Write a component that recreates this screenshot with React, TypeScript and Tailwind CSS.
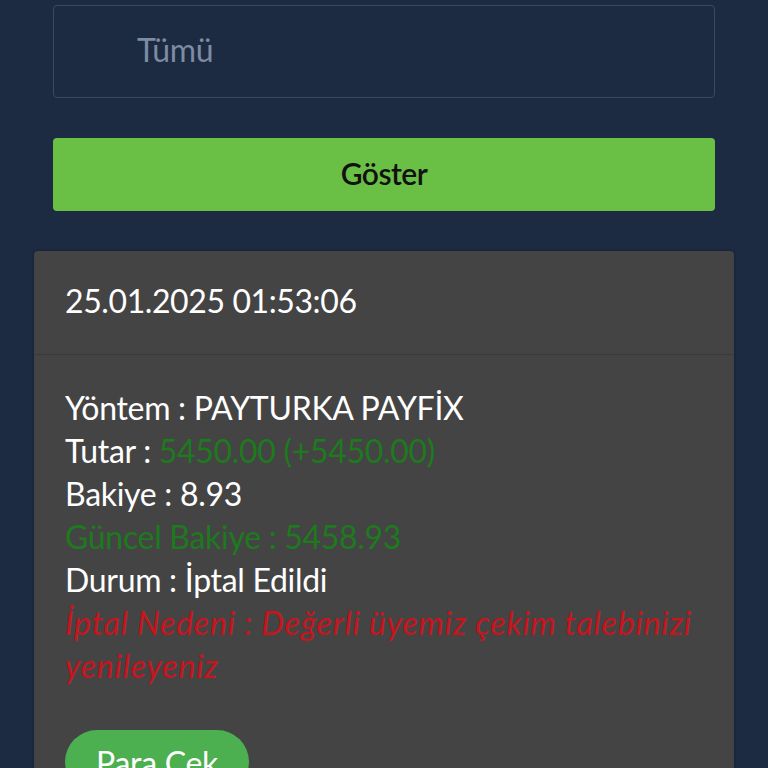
import React from 'react';

export default function App() {
  return (
    <div
      className="min-h-[768px] w-[768px] overflow-hidden bg-[#1c2a42]"
      style={{ fontFamily: 'Lato, "Liberation Sans", sans-serif' }}
    >
      <div className="px-[53px] pt-[5px]">
        {/* Filter select */}
        <div className="flex h-[93px] items-center rounded-[4px] border border-[#3b4a63] pb-[4px] pl-[83px]">
          <span className="text-[32px] tracking-[-0.3px] text-[#7d8ba3]">Tümü</span>
        </div>

        {/* Show button */}
        <button className="mt-[40px] flex h-[73px] w-full items-center justify-center rounded-[4px] bg-[#6abf45] pb-[2px] text-[30px] font-semibold tracking-[-0.5px] text-[#111]">
          Göster
        </button>
      </div>

      {/* Transaction card */}
      <div className="mx-[34px] mt-[40px] rounded-[4px] bg-[#444444] shadow-[0_0_3px_rgba(0,0,0,0.4)]">
        <div className="flex h-[104px] items-center border-b border-[#3a3a3a] px-[31px] pb-[4px]">
          <span className="text-[32px] tracking-[-0.4px] text-white">25.01.2025 01:53:06</span>
        </div>
        <div className="px-[31px] pt-[31px] pb-[40px] text-[32px] leading-[43px] tracking-[-0.3px] text-white">
          <div>Yöntem : PAYTURKA PAYFİX</div>
          <div>
            Tutar : <span className="text-[#1d7a1d]">5450.00 (+5450.00)</span>
          </div>
          <div>Bakiye : 8.93</div>
          <div className="text-[#1d7a1d]">Güncel Bakiye : 5458.93</div>
          <div>Durum : İptal Edildi</div>
          <div className="italic tracking-[0.8px] text-[#c8141c]">
            İptal Nedeni : Değerli üyemiz çekim talebinizi yenileyeniz
          </div>
          <button className="mt-[43px] flex h-[64px] w-[184px] items-center justify-center rounded-full bg-[#4caf50] text-[32px] tracking-[-0.3px] text-white">
            Para Çek
          </button>
        </div>
      </div>
    </div>
  );
}
